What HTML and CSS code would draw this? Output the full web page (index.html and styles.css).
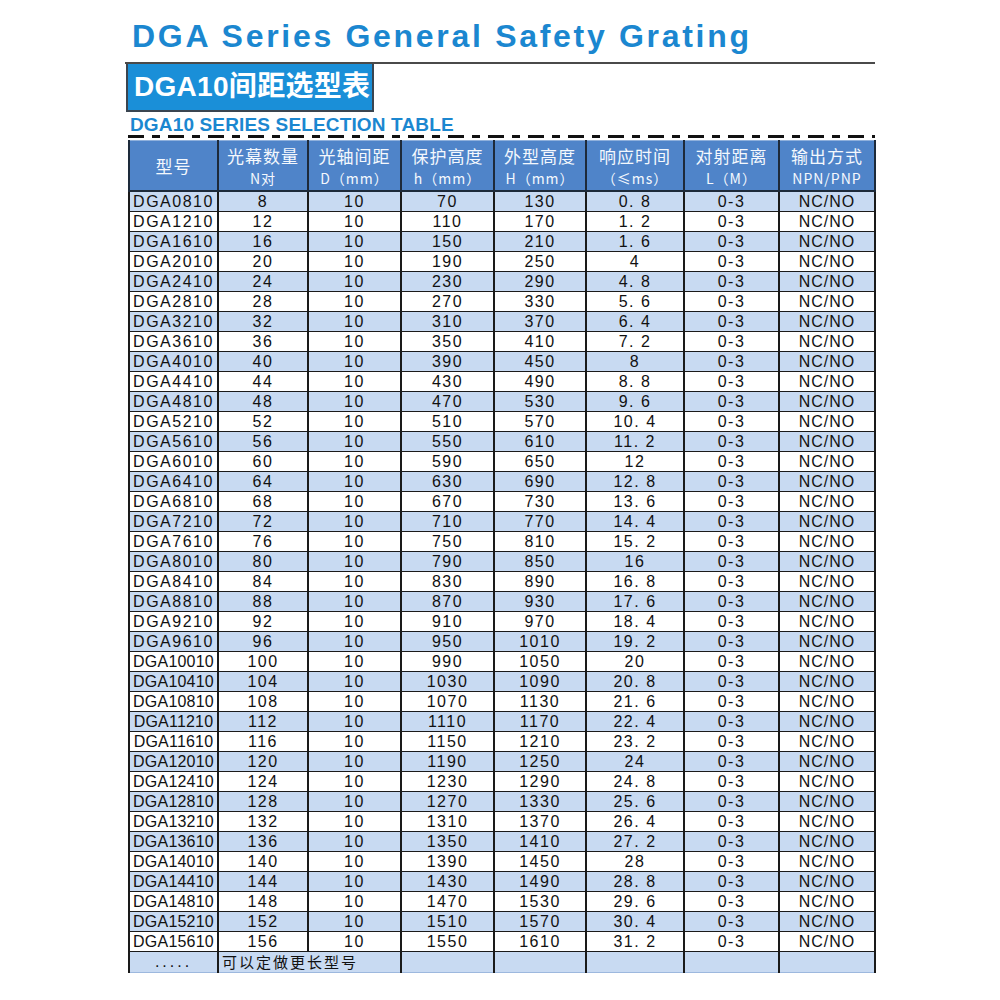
FILE: index.html
```html
<!DOCTYPE html>
<html lang="zh-CN">
<head>
<meta charset="utf-8">
<title>DGA Series General Safety Grating</title>
<link rel="stylesheet" href="styles.css">
</head>
<body>
<div class="sheet">
  <h1 class="title">DGA Series General Safety Grating</h1>
  <div class="rule"></div>
  <div class="badge">DGA10间距选型表</div>
  <div class="subtitle">DGA10 SERIES SELECTION TABLE</div>
  <div class="dashes"></div>
  <table class="spec">
    <colgroup>
      <col class="c1"><col class="c2"><col class="c3"><col class="c4"><col class="c5"><col class="c6"><col class="c7"><col class="c8">
    </colgroup>
    <thead>
      <tr>
        <th><span class="l1">型号</span></th>
        <th><span class="l1">光幕数量</span><span class="l2">N对</span></th>
        <th><span class="l1">光轴间距</span><span class="l2">D（mm）</span></th>
        <th><span class="l1">保护高度</span><span class="l2">h（mm）</span></th>
        <th><span class="l1">外型高度</span><span class="l2">H（mm）</span></th>
        <th><span class="l1">响应时间</span><span class="l2">（≤ms）</span></th>
        <th><span class="l1">对射距离</span><span class="l2">L（M）</span></th>
        <th><span class="l1">输出方式</span><span class="l2">NPN/PNP</span></th>
      </tr>
    </thead>
    <tbody>
      <tr><td>DGA0810</td><td>8</td><td>10</td><td>70</td><td>130</td><td>0. 8</td><td>0-3</td><td>NC/NO</td></tr>
      <tr><td>DGA1210</td><td>12</td><td>10</td><td>110</td><td>170</td><td>1. 2</td><td>0-3</td><td>NC/NO</td></tr>
      <tr><td>DGA1610</td><td>16</td><td>10</td><td>150</td><td>210</td><td>1. 6</td><td>0-3</td><td>NC/NO</td></tr>
      <tr><td>DGA2010</td><td>20</td><td>10</td><td>190</td><td>250</td><td>4</td><td>0-3</td><td>NC/NO</td></tr>
      <tr><td>DGA2410</td><td>24</td><td>10</td><td>230</td><td>290</td><td>4. 8</td><td>0-3</td><td>NC/NO</td></tr>
      <tr><td>DGA2810</td><td>28</td><td>10</td><td>270</td><td>330</td><td>5. 6</td><td>0-3</td><td>NC/NO</td></tr>
      <tr><td>DGA3210</td><td>32</td><td>10</td><td>310</td><td>370</td><td>6. 4</td><td>0-3</td><td>NC/NO</td></tr>
      <tr><td>DGA3610</td><td>36</td><td>10</td><td>350</td><td>410</td><td>7. 2</td><td>0-3</td><td>NC/NO</td></tr>
      <tr><td>DGA4010</td><td>40</td><td>10</td><td>390</td><td>450</td><td>8</td><td>0-3</td><td>NC/NO</td></tr>
      <tr><td>DGA4410</td><td>44</td><td>10</td><td>430</td><td>490</td><td>8. 8</td><td>0-3</td><td>NC/NO</td></tr>
      <tr><td>DGA4810</td><td>48</td><td>10</td><td>470</td><td>530</td><td>9. 6</td><td>0-3</td><td>NC/NO</td></tr>
      <tr><td>DGA5210</td><td>52</td><td>10</td><td>510</td><td>570</td><td>10. 4</td><td>0-3</td><td>NC/NO</td></tr>
      <tr><td>DGA5610</td><td>56</td><td>10</td><td>550</td><td>610</td><td>11. 2</td><td>0-3</td><td>NC/NO</td></tr>
      <tr><td>DGA6010</td><td>60</td><td>10</td><td>590</td><td>650</td><td>12</td><td>0-3</td><td>NC/NO</td></tr>
      <tr><td>DGA6410</td><td>64</td><td>10</td><td>630</td><td>690</td><td>12. 8</td><td>0-3</td><td>NC/NO</td></tr>
      <tr><td>DGA6810</td><td>68</td><td>10</td><td>670</td><td>730</td><td>13. 6</td><td>0-3</td><td>NC/NO</td></tr>
      <tr><td>DGA7210</td><td>72</td><td>10</td><td>710</td><td>770</td><td>14. 4</td><td>0-3</td><td>NC/NO</td></tr>
      <tr><td>DGA7610</td><td>76</td><td>10</td><td>750</td><td>810</td><td>15. 2</td><td>0-3</td><td>NC/NO</td></tr>
      <tr><td>DGA8010</td><td>80</td><td>10</td><td>790</td><td>850</td><td>16</td><td>0-3</td><td>NC/NO</td></tr>
      <tr><td>DGA8410</td><td>84</td><td>10</td><td>830</td><td>890</td><td>16. 8</td><td>0-3</td><td>NC/NO</td></tr>
      <tr><td>DGA8810</td><td>88</td><td>10</td><td>870</td><td>930</td><td>17. 6</td><td>0-3</td><td>NC/NO</td></tr>
      <tr><td>DGA9210</td><td>92</td><td>10</td><td>910</td><td>970</td><td>18. 4</td><td>0-3</td><td>NC/NO</td></tr>
      <tr><td>DGA9610</td><td>96</td><td>10</td><td>950</td><td>1010</td><td>19. 2</td><td>0-3</td><td>NC/NO</td></tr>
      <tr><td class="w8">DGA10010</td><td>100</td><td>10</td><td>990</td><td>1050</td><td>20</td><td>0-3</td><td>NC/NO</td></tr>
      <tr><td class="w8">DGA10410</td><td>104</td><td>10</td><td>1030</td><td>1090</td><td>20. 8</td><td>0-3</td><td>NC/NO</td></tr>
      <tr><td class="w8">DGA10810</td><td>108</td><td>10</td><td>1070</td><td>1130</td><td>21. 6</td><td>0-3</td><td>NC/NO</td></tr>
      <tr><td class="w8">DGA11210</td><td>112</td><td>10</td><td>1110</td><td>1170</td><td>22. 4</td><td>0-3</td><td>NC/NO</td></tr>
      <tr><td class="w8">DGA11610</td><td>116</td><td>10</td><td>1150</td><td>1210</td><td>23. 2</td><td>0-3</td><td>NC/NO</td></tr>
      <tr><td class="w8">DGA12010</td><td>120</td><td>10</td><td>1190</td><td>1250</td><td>24</td><td>0-3</td><td>NC/NO</td></tr>
      <tr><td class="w8">DGA12410</td><td>124</td><td>10</td><td>1230</td><td>1290</td><td>24. 8</td><td>0-3</td><td>NC/NO</td></tr>
      <tr><td class="w8">DGA12810</td><td>128</td><td>10</td><td>1270</td><td>1330</td><td>25. 6</td><td>0-3</td><td>NC/NO</td></tr>
      <tr><td class="w8">DGA13210</td><td>132</td><td>10</td><td>1310</td><td>1370</td><td>26. 4</td><td>0-3</td><td>NC/NO</td></tr>
      <tr><td class="w8">DGA13610</td><td>136</td><td>10</td><td>1350</td><td>1410</td><td>27. 2</td><td>0-3</td><td>NC/NO</td></tr>
      <tr><td class="w8">DGA14010</td><td>140</td><td>10</td><td>1390</td><td>1450</td><td>28</td><td>0-3</td><td>NC/NO</td></tr>
      <tr><td class="w8">DGA14410</td><td>144</td><td>10</td><td>1430</td><td>1490</td><td>28. 8</td><td>0-3</td><td>NC/NO</td></tr>
      <tr><td class="w8">DGA14810</td><td>148</td><td>10</td><td>1470</td><td>1530</td><td>29. 6</td><td>0-3</td><td>NC/NO</td></tr>
      <tr><td class="w8">DGA15210</td><td>152</td><td>10</td><td>1510</td><td>1570</td><td>30. 4</td><td>0-3</td><td>NC/NO</td></tr>
      <tr><td class="w8">DGA15610</td><td>156</td><td>10</td><td>1550</td><td>1610</td><td>31. 2</td><td>0-3</td><td>NC/NO</td></tr>
      <tr class="more"><td class="dots">.....</td><td colspan="2" class="note">可以定做更长型号</td><td></td><td></td><td></td><td></td><td></td></tr>
    </tbody>
  </table>
</div>
</body>
</html>
```
FILE: styles.css
```css
html, body {
  margin: 0;
  padding: 0;
  background: #ffffff;
}

.sheet {
  width: 750px;
  margin-left: 125px;
  padding-top: 16px;
}

.title {
  margin: 0;
  padding-left: 7px;
  font-family: "Liberation Sans", Arial, sans-serif;
  font-weight: bold;
  font-size: 32px;
  line-height: 40px;
  letter-spacing: 2.7px;
  color: #1b87d0;
  white-space: nowrap;
}

.rule {
  margin-top: 6px;
  height: 2px;
  background: #4a4a4a;
}

.badge {
  width: 238px;
  height: 46px;
  margin-left: 1px;
  background: #1a8fd8;
  border-left: 2px solid #3a4550;
  border-right: 2px solid #3a4550;
  border-bottom: 2px solid #3a4550;
  color: #ffffff;
  font-family: "Liberation Sans", "Noto Sans CJK SC", sans-serif;
  font-weight: bold;
  font-size: 28px;
  line-height: 46px;
  letter-spacing: 0.3px;
  padding-left: 6px;
  box-sizing: content-box;
  white-space: nowrap;
}

.subtitle {
  margin-top: 3px;
  padding-left: 5px;
  font-family: "Liberation Sans", Arial, sans-serif;
  font-weight: bold;
  font-size: 19px;
  line-height: 20px;
  letter-spacing: 0.15px;
  color: #1b87d0;
  white-space: nowrap;
}

.dashes {
  margin-left: 3px;
  height: 3px;
  background: repeating-linear-gradient(90deg, #111 0 16px, transparent 16px 24px, #111 24px 32px, transparent 32px 40px);
}

.spec {
  margin-top: 2px;
  margin-left: 3px;
  width: 746px;
  border-collapse: collapse;
  table-layout: fixed;
  border-top: 1px solid #8fb0dc;
  font-family: "Liberation Sans", Arial, sans-serif;
}

.c1 { width: 89px; }
.c2 { width: 90px; }
.c3 { width: 93px; }
.c4 { width: 93px; }
.c5 { width: 92px; }
.c6 { width: 98px; }
.c7 { width: 95px; }
.c8 { width: 96px; }

.spec th {
  height: 49px;
  padding: 0;
  background: #4f84c9;
  color: #f4f8fd;
  font-family: "Noto Sans CJK SC", sans-serif;
  font-weight: normal;
  text-align: center;
  vertical-align: middle;
  border-left: 2px solid #1d2a3a;
  border-right: 2px solid #1d2a3a;
  border-bottom: 2px solid #1d2a3a;
}

.spec th .l1 {
  display: block;
  font-size: 17px;
  line-height: 25px;
  letter-spacing: 1px;
}

.spec th .l2 {
  display: block;
  font-size: 14px;
  line-height: 21px;
  letter-spacing: 1px;
}

.spec td {
  height: 19px;
  padding: 0;
  text-align: center;
  vertical-align: middle;
  font-size: 16px;
  line-height: 18px;
  letter-spacing: 1.5px;
  color: #111111;
  border-left: 2px solid #1a1a1a;
  border-right: 2px solid #1a1a1a;
  border-bottom: 1px solid #1a1a1a;
  white-space: nowrap;
}

.spec tbody tr:nth-child(odd) td {
  background: #c8daf2;
}

.spec tbody tr:nth-child(even) td {
  background: #ffffff;
}

.spec td.w8 {
  letter-spacing: 0.2px;
}

.spec td:nth-child(8) {
  letter-spacing: 1px;
}

.spec .more td {
  height: 20px;
  border-bottom: 1px solid #9db8de;
}

.spec .more .note {
  text-align: left;
  padding-left: 3px;
  font-family: "Noto Sans CJK SC", sans-serif;
  font-size: 15px;
  letter-spacing: 2px;
}

.spec .more .dots {
  letter-spacing: 3px;
}
```
